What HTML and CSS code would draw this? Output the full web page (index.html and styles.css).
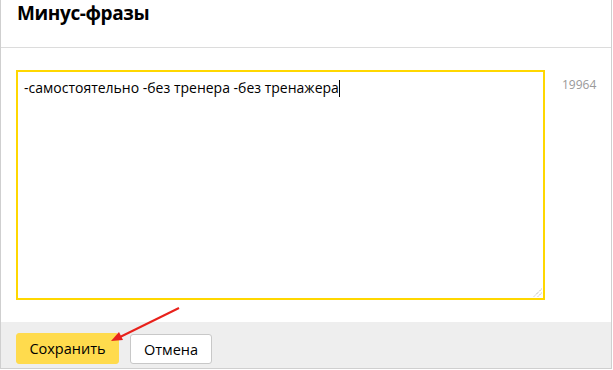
FILE: index.html
```html
<!DOCTYPE html>
<html lang="ru">
<head>
<meta charset="utf-8">
<link rel="stylesheet" href="styles.css">
</head>
<body>
<div class="dialog">
  <div class="header">
    <h1 class="title">Минус-фразы</h1>
  </div>
  <div class="content">
    <div class="field">
      <span class="value">-самостоятельно -без тренера -без тренажера</span><span class="caret"></span>
      <svg class="grip" width="9" height="9" viewBox="0 0 9 9">
        <line x1="8.5" y1="1" x2="1" y2="8.5" stroke="#999" stroke-width="1" stroke-dasharray="1 1"/>
        <line x1="8.5" y1="5" x2="5" y2="8.5" stroke="#999" stroke-width="1" stroke-dasharray="1 1"/>
      </svg>
    </div>
    <div class="counter">19964</div>
  </div>
  <div class="footer">
    <button class="btn btn-save">Сохранить</button>
    <button class="btn btn-cancel">Отмена</button>
  </div>
  <svg class="arrow" width="613" height="370" viewBox="0 0 613 370">
    <line x1="179" y1="308" x2="118" y2="338" stroke="#e8211b" stroke-width="2"/>
    <polygon points="111,341 119,332 123,340" fill="#e8211b"/>
  </svg>
</div>
</body>
</html>
```

FILE: styles.css
```css
* { box-sizing: border-box; }
html, body { margin: 0; padding: 0; background: #fff; }
body { font-family: "Open Sans", "Noto Sans", "DejaVu Sans", sans-serif; color: #000; }

.dialog {
  position: relative;
  width: 612px;
  height: 369px;
  border-left: 1px solid #cfcfcf;
  border-right: 1px solid #cfcfcf;
  border-bottom: 1px solid #cfcfcf;
  display: flex;
  flex-direction: column;
}

.header {
  height: 48px;
  border-bottom: 1px solid #dcdcdc;
  padding-left: 16px;
}
.title {
  margin: 0;
  font-size: 19px;
  font-weight: 700;
  line-height: 26px;
  letter-spacing: -0.4px;
}

.content {
  flex: 1;
  display: flex;
  align-items: flex-start;
  padding: 22px 0 0 15px;
}
.field {
  position: relative;
  width: 529px;
  height: 230px;
  border: 2px solid #ffd700;
  padding: 6px 0 0 6px;
  font-size: 14px;
  line-height: 19px;
}
.caret {
  display: inline-block;
  width: 1px;
  height: 17px;
  background: #000;
  vertical-align: -4px;
}
.grip {
  position: absolute;
  right: 1px;
  bottom: 1px;
}
.counter {
  margin-left: 17px;
  padding-top: 6px;
  font-size: 12px;
  color: #999;
}

.footer {
  height: 46px;
  background: #eeeeee;
  display: flex;
  align-items: flex-start;
  gap: 11px;
  padding: 11px 0 0 15px;
}
.btn {
  font-family: inherit;
  font-size: 14.5px;
  height: 31px;
  border-radius: 3px;
  padding: 0;
  color: #000;
  margin: 0;
}
.btn-save {
  width: 103px;
  background: #ffdb4d;
  border: 1px solid #ffdb4d;
}
.btn-cancel {
  width: 82px;
  margin-top: 1px;
  height: 30px;
  background: #fff;
  border: 1px solid #c8c8c8;
}

.arrow {
  position: absolute;
  left: -1px;
  top: 0;
  pointer-events: none;
}
```
